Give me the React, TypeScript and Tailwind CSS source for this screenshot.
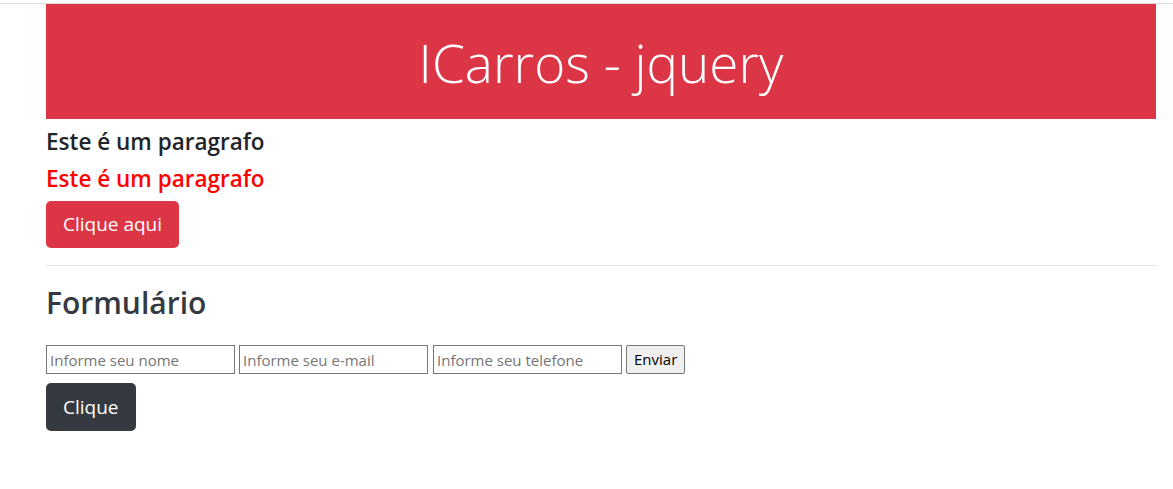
import { useState } from "react";

function App() {
  const [nome, setNome] = useState("");
  const [email, setEmail] = useState("");
  const [telefone, setTelefone] = useState("");

  return (
    <div
      className="min-h-[489px] bg-white pt-[3px] text-[#212529]"
      style={{ fontFamily: '"Open Sans", "Noto Sans", sans-serif' }}
    >
      <div className="border-t border-[#dcdcdc]">
        <div className="ml-[46px] w-[1110px]">
          <div className="h-[115px] bg-[#dc3545] flex items-center justify-center">
            <h1 className="text-[53px] font-light text-white leading-none mt-[2px]">
              ICarros - jquery
            </h1>
          </div>

          <h5 className="mt-[8px] text-[22.5px] font-semibold leading-[30px] mb-[7px]">
            Este é um paragrafo
          </h5>
          <h5 className="text-[22.5px] font-semibold leading-[30px] mb-[7px] text-[#ff0000]">
            Este é um paragrafo
          </h5>
          <button className="h-[47px] px-[17px] rounded-[5px] bg-[#dc3545] text-white text-[19px] leading-none">
            Clique aqui
          </button>

          <hr className="mt-[17px] mb-[18px] border-t border-[#e5e5e5]" />

          <h2 className="text-[30px] font-semibold leading-[38px] text-[#343a40] mb-[23px]">
            Formulário
          </h2>

          <form
            className="flex items-center"
            onSubmit={(e) => {
              e.preventDefault();
            }}
          >
            <input
              className="w-[189px] h-[29px] border border-[#767676] px-[3px] text-[15px] placeholder:text-[#757575] outline-none"
              type="text"
              value={nome}
              placeholder="Informe seu nome"
              onChange={(e) => setNome(e.target.value)}
            />
            <input
              className="ml-[4px] w-[189px] h-[29px] border border-[#767676] px-[3px] text-[15px] placeholder:text-[#757575] outline-none"
              type="text"
              value={email}
              placeholder="Informe seu e-mail"
              onChange={(e) => setEmail(e.target.value)}
            />
            <input
              className="ml-[5px] w-[189px] h-[29px] border border-[#767676] px-[3px] text-[15px] placeholder:text-[#757575] outline-none"
              type="text"
              value={telefone}
              placeholder="Informe seu telefone"
              onChange={(e) => setTelefone(e.target.value)}
            />
            <button
              type="submit"
              className="ml-[4px] h-[29px] px-[7px] border border-[#767676] rounded-[2px] bg-[#efefef] text-[15px] text-black"
            >
              Enviar
            </button>
          </form>

          <button className="mt-[9px] h-[48px] px-[17px] rounded-[5px] bg-[#343a40] text-white text-[19px] leading-none">
            Clique
          </button>
        </div>
      </div>
    </div>
  );
}

export default App;
